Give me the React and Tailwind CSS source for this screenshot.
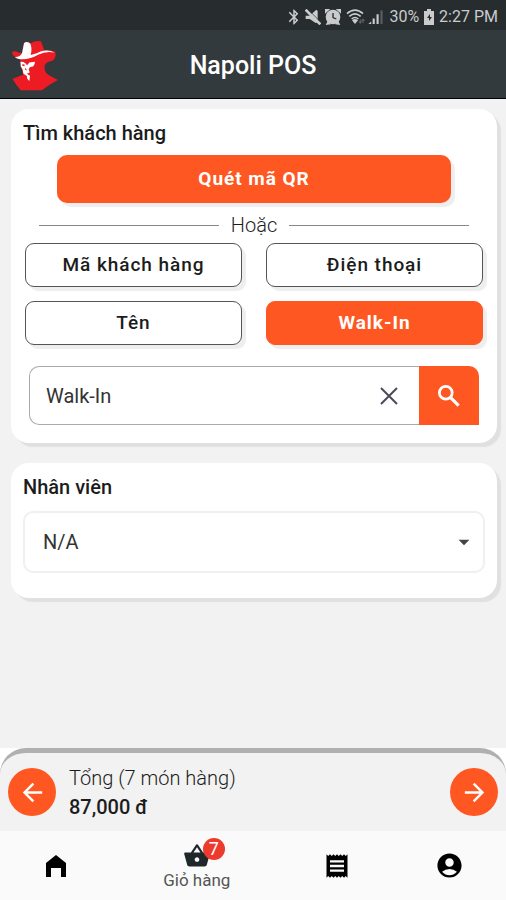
import React, { useState } from 'react'
import {
    MdAccountCircle,
    MdArrowBack,
    MdArrowDropDown,
    MdArrowForward,
    MdBluetooth,
    MdReceipt,
    MdShoppingBasket,
} from 'react-icons/md'

const searchTypes = [
    { id: 'code', label: 'Mã khách hàng' },
    { id: 'phone', label: 'Điện thoại' },
    { id: 'name', label: 'Tên' },
    { id: 'walkin', label: 'Walk-In' },
]

const Logo = () => (
    <svg viewBox="30 25 150 160" className="w-[50px] h-[53px]" aria-label="Napoli">
        {/* head, neck and coat */}
        <path fill="#ed1c24" d="M60 84 Q95 80 128 66 L166 62 Q170 84 156 91 Q140 92 134 106 Q132 126 146 134 L174 149 L150 162 L126 180 L62 180 L48 162 L37 146 L70 132 Q64 120 60 84Z" />
        {/* hat */}
        <path fill="#ed1c24" d="M35 66 Q42 58 54 66 L66 67 L72 36 Q82 30 93 38 Q106 28 123 32 L133 59 Q152 56 164 64 Q172 78 158 90 Q146 96 132 90 Q118 76 100 80 Q80 90 58 86 Q40 80 35 66Z" />
        {/* light on the hat */}
        <path fill="#fff" d="M72 37 Q82 30 91 39 Q97 52 92 73 Q112 68 124 62 Q146 56 164 66 Q138 61 116 72 Q86 89 60 86 Q50 84 44 79 Q60 80 66 67Z" />
        {/* face */}
        <path fill="#fff" d="M61 94 Q68 92 76 98 L81 104 L88 96 L105 94 Q104 106 97 109 Q88 108 86 116 L89 126 L80 130 L90 136 L88 152 L82 146 L80 136 L70 130 L68 118 L62 108Z" />
        <path fill="#ed1c24" d="M66 101 L74 102 L73 107 L67 106Z M76 112 L81 120 L75 118Z" />
    </svg>
)

const StatusBar = () => (
    <div className="flex h-[30px] items-center justify-end bg-[#272c2f] pt-[3px] pr-2 text-[#c9cbcc]">
        <MdBluetooth size={18} className="mr-[2px]" />
        <svg viewBox="0 0 24 24" className="mr-1 h-4 w-4" fill="currentColor">
            <path d="M1 10h6l10-9 2 2v17l-3 1-9-6H1z" />
            <path d="M1 1l22 22" stroke="currentColor" strokeWidth="4" />
            <path d="M5 1l19 19" stroke="#272c2f" strokeWidth="1" />
        </svg>
        <svg viewBox="0 0 24 24" className="mr-[5px] h-4 w-4">
            <circle cx="12" cy="12" r="11" fill="currentColor" />
            <path d="M0 7V0h8zM24 7V0h-8zM1 24l3-6 5 5zM23 24l-3-6-5 5z" fill="currentColor" />
            <path d="M12 6v7l5 2" fill="none" stroke="#272c2f" strokeWidth="2" />
        </svg>
        <svg viewBox="0 0 60 48" className="mr-[2px] h-4 w-5" fill="none" stroke="currentColor" strokeWidth="5">
            <path d="M3 14Q27-7 51 14M10 22Q27 7 44 22M17 30Q27 21 37 30" />
            <path d="M18 34Q27 26 36 34L27 45Z" fill="currentColor" stroke="none" />
            <path d="M43 31v11M51 31v11M39 37l4 6 4-6M47 36l4-6 4 6" stroke="#7c8082" strokeWidth="2" />
        </svg>
        <svg viewBox="0 0 45 45" className="mr-[5px] h-4 w-4">
            <path d="M1 42h8v-7zM13 42h6V27h-6zM24 42h6V15h-6z" fill="currentColor" />
            <path d="M35 42h6V4h-6z" fill="#5a5f62" />
        </svg>
        <span className="text-base">30%</span>
        <svg viewBox="0 0 12 16" className="mx-1 h-4 w-3">
            <path d="M4 0h4v2h3v14H1V2h3z" fill="currentColor" />
            <path d="M7 5L4 9h2v3l3-4H7z" fill="#272c2f" />
        </svg>
        <span className="text-base">2:27 PM</span>
    </div>
)

const Card = ({ children, className }) => (
    <section className={`rounded-[18px] bg-white px-3 shadow-[4px_4px_1px_#e0e0e0] ${className}`}>
        {children}
    </section>
)

const App = () => {
    const [searchType, setSearchType] = useState('walkin')
    const [query, setQuery] = useState('Walk-In')

    const handleSelectType = (type) => {
        setSearchType(type.id)
        setQuery(type.id === 'walkin' ? type.label : '')
    }

    return (
        <div className="flex min-h-screen flex-col bg-[#f2f2f2] font-['Roboto',sans-serif] text-[#1c1c1c]">
            <StatusBar />
            <header className="grid h-[69px] grid-cols-[1fr_auto_1fr] items-center border-b border-black bg-[#333a3e] px-[10px] pt-[3px]">
                <Logo />
                <h1 className="text-[25px] font-medium text-white">Napoli POS</h1>
            </header>

            <main className="flex flex-1 flex-col gap-5 py-[10px] pl-[11px] pr-[9px]">
                <Card className="pb-[18px] pt-[10px]">
                    <h2 className="text-xl leading-7 font-medium">Tìm khách hàng</h2>
                    <div className="mt-2 px-[34px]">
                        <button className="h-12 w-full rounded-[10px] bg-[#ff5722] text-[19px] font-bold tracking-wider text-white shadow-[4px_4px_1px_#eeeeee]">
                            Quét mã QR
                        </button>
                    </div>
                    <div className="mt-2 flex items-center gap-3 px-4 text-xl leading-7 font-light">
                        <span className="h-px flex-1 bg-[#888]"></span>
                        Hoặc
                        <span className="h-px flex-1 bg-[#888]"></span>
                    </div>

                    <div className="mt-1 grid grid-cols-2 gap-x-6 gap-y-[14px] px-[2px]">
                        {searchTypes.map((type) => (
                            <button
                                key={type.id}
                                onClick={() => handleSelectType(type)}
                                className={
                                    searchType === type.id
                                        ? 'h-11 rounded-[9px] border border-[#ff5722] bg-[#ff5722] text-[19px] font-bold tracking-wider text-white shadow-[4px_4px_1px_#eeeeee]'
                                        : 'h-11 rounded-[9px] border border-[#555] bg-white text-[19px] font-medium tracking-wider shadow-[4px_4px_1px_#eeeeee]'
                                }
                            >
                                {type.label}
                            </button>
                        ))}
                    </div>

                    <div className="mt-[21px] flex h-[59px] px-[6px]">
                        <div className="flex min-w-0 flex-1 items-center rounded-l-[10px] border border-r-0 border-[#aaa] pl-4 pr-5">
                            <input
                                aria-label="Tìm khách hàng"
                                className="min-w-0 flex-1 text-xl text-[#333] outline-none"
                                value={query}
                                onChange={(e) => setQuery(e.target.value)}
                            />
                            <button aria-label="Xóa" onClick={() => setQuery('')}>
                                <svg viewBox="0 0 20 20" className="h-5 w-5" fill="none" stroke="#4a4a5c" strokeWidth="2">
                                    <path d="M2 2l16 16M18 2L2 18" />
                                </svg>
                            </button>
                        </div>
                        <button aria-label="Tìm" className="flex w-[60px] items-center justify-center rounded-tr-[10px] bg-[#ff5722] text-white">
                            <svg viewBox="0 0 24 24" className="h-[22px] w-[22px]" fill="none" stroke="currentColor" strokeWidth="3">
                                <circle cx="8.5" cy="8.5" r="7" />
                                <path d="M13.5 13.5l9 9" strokeWidth="3.5" />
                            </svg>
                        </button>
                    </div>
                </Card>

                <Card className="pb-[25px] pt-[10px]">
                    <label htmlFor="staff" className="block text-xl leading-7 font-medium">Nhân viên</label>
                    <div className="mt-[10px] grid items-center">
                        <select
                            id="staff"
                            className="col-start-1 row-start-1 h-[62px] w-full appearance-none rounded-[10px] border-2 border-[#f0f0f0] bg-white pl-[18px] text-xl text-[#333]"
                        >
                            <option>N/A</option>
                        </select>
                        <MdArrowDropDown size={26} className="pointer-events-none col-start-1 row-start-1 mr-2 justify-self-end text-[#444]" />
                    </div>
                </Card>
            </main>

            <div className="bg-white">
                <div className="flex h-[83px] items-center gap-[13px] rounded-t-[26px] border-t-[5px] border-[#b0b0b0] bg-[#f2f2f2] px-2">
                    <button aria-label="Quay lại" className="flex h-12 w-12 items-center justify-center rounded-full bg-[#ff5722] text-white">
                        <MdArrowBack size={29} />
                    </button>
                    <div className="flex-1">
                        <p className="text-xl leading-[30px] font-light">Tổng (7 món hàng)</p>
                        <p className="text-xl leading-7 font-medium">87,000 đ</p>
                    </div>
                    <button aria-label="Tiếp tục" className="flex h-12 w-12 items-center justify-center rounded-full bg-[#ff5722] text-white">
                        <MdArrowForward size={29} />
                    </button>
                </div>
            </div>

            <nav className="grid h-[69px] grid-cols-[2fr_3fr_2fr_2fr] items-center justify-items-center bg-[#fafafa] text-black">
                <a href="#home" aria-label="Trang chủ">
                    <svg viewBox="0 0 20 22" className="h-[22px] w-5" fill="currentColor">
                        <path d="M10 0L0 8v14h5v-9h10v9h5V8z" />
                    </svg>
                </a>
                <a href="#cart" className="flex flex-col items-center text-[#555]">
                    <span className="relative">
                        {/* filled basket body with a round hole */}
                        <MdShoppingBasket size={28} className="text-[#20272b]" />
                        <span className="absolute -top-1 left-5 flex h-[22px] w-[22px] items-center justify-center rounded-full bg-[#ec3a2d] text-lg text-white">7</span>
                    </span>
                    <span className="text-[17px] leading-5">Giỏ hàng</span>
                </a>
                <a href="#orders" aria-label="Đơn hàng">
                    <MdReceipt size={28} />
                </a>
                <a href="#account" aria-label="Tài khoản">
                    <MdAccountCircle size={29} />
                </a>
            </nav>
        </div>
    )
}

export default App
